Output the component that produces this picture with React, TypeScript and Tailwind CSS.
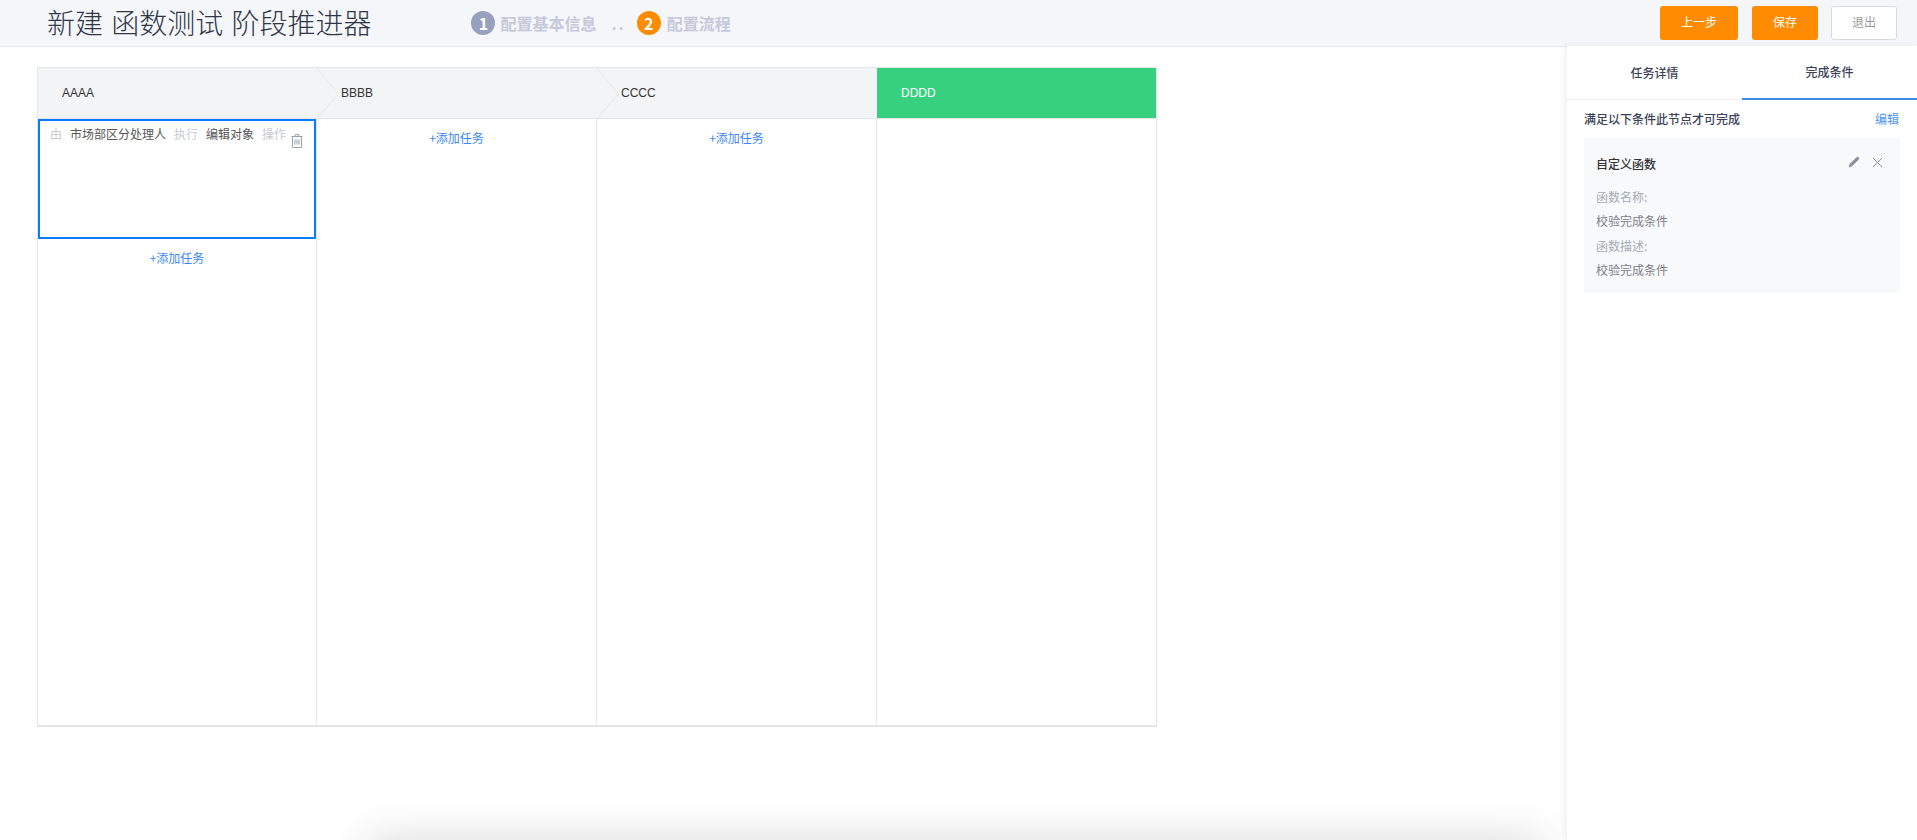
import { Pencil } from 'lucide-react';

const font = "font-['Noto_Sans_CJK_SC','Noto_Sans',sans-serif]";

const stages = [
  { name: 'AAAA', cls: 'w-[279px] pl-[24px]' },
  { name: 'BBBB', cls: 'w-[280px] pl-[24px]' },
  { name: 'CCCC', cls: 'w-[280px] pl-[24px]' },
];

function Chevron() {
  return (
    <svg className="absolute left-full top-0 z-10 -ml-px" width="24" height="51" viewBox="0 0 24 51" fill="none">
      <path d="M0.5 0 L22.5 26 L0.5 51" stroke="#e6e8ec" strokeWidth="1" />
    </svg>
  );
}

function Trash() {
  return (
    <svg width="12" height="14" viewBox="0 0 12 14" fill="none" stroke="#9aa0aa" strokeWidth="1">
      <path d="M0.5 2.5 H11.5" />
      <path d="M4 2.5 V0.7 H8 V2.5" />
      <path d="M1.5 2.5 V13.5 H10.5 V2.5" />
      <path d="M4 5.5 V10.5 M6 5.5 V10.5 M8 5.5 V10.5" />
    </svg>
  );
}

function AddTask() {
  return <div className="text-center text-xs leading-[18px] text-[#3b86f7]">+添加任务</div>;
}

export default function App() {
  return (
    <div className={`relative h-[840px] w-full overflow-hidden bg-white ${font}`}>
      {/* Header */}
      <div className="flex h-[47px] items-center border-b border-[#e6e8ee] bg-[#f5f6fa] pl-[47px] pr-[20px]">
        <h1 className="pb-[2px] text-[28px] leading-[44px] font-light text-[#2f3747] [word-spacing:2px]">新建 函数测试 阶段推进器</h1>
        <div className="ml-[100px] flex items-center pb-[1px]">
          <span className="flex h-6 w-6 items-center justify-center rounded-full bg-[#97a0bd] text-base font-bold text-white">1</span>
          <span className="ml-[5px] text-base font-bold text-[#c5c9da]">配置基本信息</span>
          <span className="ml-[15px] text-base font-bold tracking-[2px] text-[#c5c9da]">..</span>
          <span className="ml-[11px] flex h-6 w-6 items-center justify-center rounded-full bg-[#ff8c00] text-base font-bold text-white">2</span>
          <span className="ml-[6px] text-base font-bold text-[#c5c9da]">配置流程</span>
        </div>
        <div className="ml-auto flex items-center">
          <button className="h-[34px] w-[78px] rounded-[3px] bg-[#ff8c00] pb-[2px] text-xs text-white">上一步</button>
          <button className="ml-[14px] h-[34px] w-[66px] rounded-[3px] bg-[#ff8c00] pb-[2px] text-xs text-white">保存</button>
          <button className="ml-[13px] h-[34px] w-[66px] rounded-[3px] border border-[#d8dade] bg-white pb-[2px] text-xs text-[#999]">退出</button>
        </div>
      </div>

      <div className="flex">
        {/* Board */}
        <div className="min-w-0 flex-1 pl-[37px] pt-5">
          <div className="w-[1120px] border border-b-2 border-[#e3e5e9]">
            <div className="flex h-[51px] border-b border-[#e3e5e9]">
              {stages.map((s) => (
                <div key={s.name} className={`relative flex items-center bg-[#f3f4f6] font-['Liberation_Sans',sans-serif] text-xs text-[#333] ${s.cls}`}>
                  {s.name}
                  <Chevron />
                </div>
              ))}
              <div className="relative z-20 flex flex-1 items-center bg-[#37d07f] pl-[24px] font-['Liberation_Sans',sans-serif] text-xs text-white">DDDD</div>
            </div>
            <div className="flex h-[606px]">
              <div className="w-[279px] border-r border-[#e3e5e9]">
                <div className="flex h-[120px] items-start justify-between border-2 border-[#0a7cff] pl-[10px] pr-[11px] pt-[4px]">
                  <div className="flex gap-2 text-xs leading-[18px]">
                    <span className="text-[#c8cacf]">由</span>
                    <span className="text-[#555]">市场部区分处理人</span>
                    <span className="text-[#c8cacf]">执行</span>
                    <span className="text-[#555]">编辑对象</span>
                    <span className="text-[#c8cacf]">操作</span>
                  </div>
                  <div className="pt-[9px]"><Trash /></div>
                </div>
                <div className="pt-[10px]"><AddTask /></div>
              </div>
              <div className="w-[280px] border-r border-[#e3e5e9] pt-[10px]"><AddTask /></div>
              <div className="w-[280px] border-r border-[#e3e5e9] pt-[10px]"><AddTask /></div>
              <div className="flex-1" />
            </div>
          </div>
        </div>

        {/* Side panel */}
        <div className="relative z-20 -mt-px h-[794px] w-[350px] bg-white shadow-[-3px_0_6px_rgba(0,0,0,0.06)]">
          <div className="flex h-[54px] border-b border-[#eceef1] text-xs font-medium text-[#3c4257]">
            <div className="flex w-[175px] items-center justify-center">任务详情</div>
            <div className="-mb-px flex flex-1 items-center justify-center border-b-2 border-[#3b8fe0]">完成条件</div>
          </div>
          <div className="pl-[17px] pr-[17px]">
            <div className="flex h-[38px] items-center justify-between text-xs">
              <span className="font-medium text-[#3c4257]">满足以下条件此节点才可完成</span>
              <span className="mr-[1px] text-[#4d94f5]">编辑</span>
            </div>
            <div className="h-[155px] bg-[#f8f9fb] pl-[12px] pr-[17px] pt-[16px] text-xs">
              <div className="flex items-start justify-between">
                <span className="font-medium leading-5 text-[#333]">自定义函数</span>
                <div className="flex items-center gap-[12px] pt-[2px] text-[#8a90a0]">
                  <Pencil size={12} fill="currentColor" strokeWidth={1} />
                  <svg width="11" height="11" viewBox="0 0 11 11" stroke="currentColor" strokeWidth="1" fill="none">
                    <path d="M1 1 L10 10 M10 1 L1 10" />
                  </svg>
                </div>
              </div>
              <div className="mt-[14px] leading-[18px] text-[#a6abb5]">函数名称:</div>
              <div className="mt-[6px] leading-[18px] text-[#7b8088]">校验完成条件</div>
              <div className="mt-[7px] leading-[18px] text-[#a6abb5]">函数描述:</div>
              <div className="mt-[6px] leading-[18px] text-[#7b8088]">校验完成条件</div>
            </div>
          </div>
        </div>
      </div>

      {/* Shadow from the dialog sitting below the fold */}
      <div className="absolute left-[367px] top-[840px] h-10 w-[1175px] shadow-[0_0_44px_rgba(0,0,0,0.16)]" />
    </div>
  );
}
